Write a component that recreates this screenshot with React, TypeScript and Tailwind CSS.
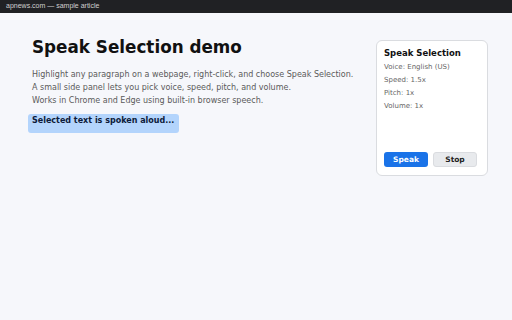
export default function App() {
  const settings = ["Voice: English (US)", "Speed: 1.5x", "Pitch: 1x", "Volume: 1x"];

  return (
    <div className="w-[512px] h-[320px] bg-[#f6f7fb] flex flex-col font-['DejaVu_Sans',sans-serif]">
      <div className="h-[13px] bg-[#202124] flex items-center px-[6px] text-[7px] text-[#d0d0d0] font-['Liberation_Sans',sans-serif]">
        apnews.com — sample article
      </div>

      <div className="flex px-[32px] pt-[22px] justify-between">
        <div className="flex flex-col">
          <h1 className="text-[16.8px] leading-[24px] font-bold text-[#111]">Speak Selection demo</h1>
          <div className="mt-[9px] text-[8px] leading-[13px] text-[#5a5a5a]">
            <p>Highlight any paragraph on a webpage, right-click, and choose Speak Selection.</p>
            <p>A small side panel lets you pick voice, speed, pitch, and volume.</p>
            <p>Works in Chrome and Edge using built-in browser speech.</p>
          </div>
          <div className="mt-[7px] -ml-[4px] w-[151px] h-[19px] rounded-[3px] bg-[#b3d4fc] px-[4px] pt-[1px] text-[8px] leading-[12px] font-bold text-[#0d1b3a]">
            Selected text is spoken aloud...
          </div>
        </div>

        <div className="mt-[5px] -mr-[8px] w-[112px] h-[136px] bg-white border border-[#dadce0] rounded-[6px] px-[7px] pt-[6px] pb-[8px] flex flex-col">
          <div className="text-[8.5px] leading-[12px] font-bold text-[#111]">Speak Selection</div>
          <div className="mt-[2px] text-[7px] leading-[13px] text-[#666]">
            {settings.map((s) => (
              <div key={s}>{s}</div>
            ))}
          </div>
          <div className="mt-auto flex gap-[5px]">
            <button className="w-[44px] h-[15px] rounded-[3px] bg-[#1a73e8] text-white text-[7.5px] font-bold">
              Speak
            </button>
            <button className="w-[44px] h-[15px] rounded-[3px] bg-[#e8eaed] border border-[#dadce0] text-[#222] text-[7.5px] font-bold">
              Stop
            </button>
          </div>
        </div>
      </div>
    </div>
  );
}
